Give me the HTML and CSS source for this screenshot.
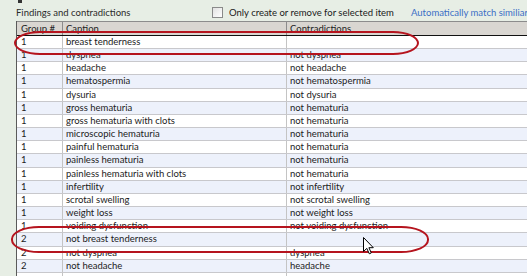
FILE: index.html
```html
<!doctype html>
<html>
  <head>
    <title>Findings and contradictions</title>
    <meta name="viewport" content="width = device-width, initial-scale = 1" />
    <link rel="stylesheet" href="styles.css">
  </head>
  <body>
    <div id="page">
      <div class="top-mark"></div>
      <div id="toolbar">
        <div class="title">Findings and contradictions</div>
        <label class="option"><span class="checkbox"></span>Only create or remove for selected item</label>
        <a class="link" href="#">Automatically match similiar</a>
      </div>
      <div id="grid">
        <div class="head">
          <div class="cell">Group #</div>
          <div class="cell">Caption</div>
          <div class="cell">Contradictions</div>
        </div>
        <div id="rows"></div>
      </div>
    </div>
    <div class="mark mark-one"></div>
    <div class="mark mark-two"></div>
    <svg class="cursor" width="12" height="18" viewBox="0 0 12 18">
      <path d="M0.5 0.5 L0.5 14.5 L3.8 11.4 L6.3 16.8 L8.3 15.9 L5.9 10.7 L10.3 10.7 Z" fill="#fff" stroke="#000" stroke-width="1" stroke-linejoin="miter" />
    </svg>
    <script>
      const findings = [
        ["1", "breast tenderness", ""],
        ["1", "dyspnea", "not dyspnea"],
        ["1", "headache", "not headache"],
        ["1", "hematospermia", "not hematospermia"],
        ["1", "dysuria", "not dysuria"],
        ["1", "gross hematuria", "not hematuria"],
        ["1", "gross hematuria with clots", "not hematuria"],
        ["1", "microscopic hematuria", "not hematuria"],
        ["1", "painful hematuria", "not hematuria"],
        ["1", "painless hematuria", "not hematuria"],
        ["1", "painless hematuria with clots", "not hematuria"],
        ["1", "infertility", "not infertility"],
        ["1", "scrotal swelling", "not scrotal swelling"],
        ["1", "weight loss", "not weight loss"],
        ["1", "voiding dysfunction", "not voiding dysfunction"],
        ["2", "not breast tenderness", ""],
        ["2", "not dyspnea", "dyspnea"],
        ["2", "not headache", "headache"],
        ["", "", ""]
      ];

      const rows = document.getElementById("rows");
      findings.forEach(([group, caption, contra], i) => {
        rows.innerHTML += `<div class="row ${i % 2 ? "alt" : ""}"><div class="cell">${group}</div><div class="cell">${caption}</div><div class="cell">${contra}</div></div>`;
      });
    </script>
  </body>
</html>
```

FILE: styles.css
```css
body,
html {
  margin: 0;
  height: 100%;
  overflow: hidden;
  background-color: #e7eee5;
  font-family: Lato, "Liberation Sans", sans-serif;
  font-size: 9.5px;
  color: #1c1c1c;
}

#page {
  padding-left: 16px;
}

.top-mark {
  width: 4px;
  height: 3px;
  margin-left: 2px;
  background-color: #333;
}

#toolbar {
  display: flex;
  align-items: center;
  height: 18px;
}

.title {
  flex: 0 0 196px;
  color: #2a2a2a;
}

.option {
  flex: 0 0 199px;
  display: flex;
  align-items: center;
  color: #1a1a1a;
}

.checkbox {
  width: 9px;
  height: 9px;
  margin-right: 6px;
  border: 1px solid #8a8a8a;
  background: linear-gradient(135deg, #e2e2e2, #ffffff);
}

.link {
  color: #3b6fc6;
  text-decoration: none;
  white-space: nowrap;
}

#grid {
  width: 540px;
  border-left: 1px solid #5a5a5a;
}

.head,
.row {
  display: grid;
  grid-template-columns: 45px 224px 1fr;
  box-sizing: border-box;
}

.head {
  height: 15px;
  border-top: 1px solid #8c8c8c;
  border-bottom: 1px solid #111;
  background-color: #d9d6d1;
  color: #222;
}

.row {
  height: 13.16px;
  border-bottom: 1px solid #c8c8cc;
  background-color: #ffffff;
}

.row.alt {
  background-color: #edf1fb;
}

.cell {
  padding-left: 4px;
  line-height: 12px;
  white-space: nowrap;
  overflow: hidden;
}

.head .cell {
  line-height: 13px;
}

.cell + .cell {
  border-left: 1px solid #c4c4c4;
  padding-left: 3px;
}

.head .cell + .cell {
  border-left-color: #8c8c8c;
}

/* red hand-drawn marks over the grid */
.mark {
  position: absolute;
  border: 2px solid #b5141e;
  box-sizing: border-box;
}

.mark-one {
  left: 14px;
  top: 31px;
  width: 405px;
  height: 24px;
  border-radius: 26px / 12px;
}

.mark-two {
  left: 11px;
  top: 226px;
  width: 418px;
  height: 27px;
  border-radius: 28px / 13px;
}

.cursor {
  position: absolute;
  left: 363px;
  top: 237px;
}
```
